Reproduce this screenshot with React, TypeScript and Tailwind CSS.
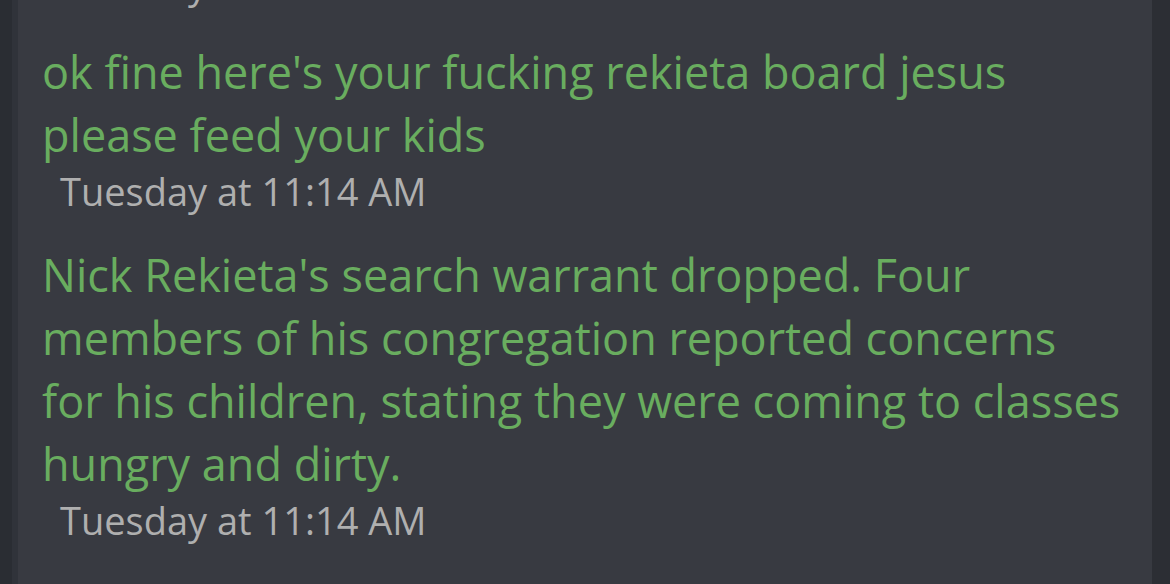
export default function App() {
  const msgs = [
    "ok fine here's your fucking rekieta board jesus please feed your kids",
    "Nick Rekieta's search warrant dropped. Four members of his congregation reported concerns for his children, stating they were coming to classes hungry and dirty.",
  ];
  return (
    <div className="flex h-[584px] w-[1170px] overflow-hidden bg-[#2c2f35] font-['Open_Sans',sans-serif]">
      <div className="w-[12px] shrink-0 bg-[#2a2d33]" />
      <div className="w-[6px] shrink-0 bg-[#30333a]" />
      <div className="flex w-[1134px] flex-col bg-[#383a41] pl-[24px] pr-[30px]">
        <div className="-mt-[41px] pl-[18px] text-[38px] leading-[50px] text-[#afafaf]">
          Tuesday at 11:14 AM
        </div>
        {msgs.map((m, i) => (
          <div key={i} className={i === 0 ? "mt-[31px] flex flex-col" : "mt-[27px] flex flex-col"}>
            <div className="text-[45px] leading-[63px] text-[#69ad5f]">{m}</div>
            <div className="pl-[18px] text-[38px] leading-[50px] text-[#afafaf]">
              Tuesday at 11:14 AM
            </div>
          </div>
        ))}
      </div>
      <div className="flex-1 bg-[#2c2e34]" />
    </div>
  );
}
